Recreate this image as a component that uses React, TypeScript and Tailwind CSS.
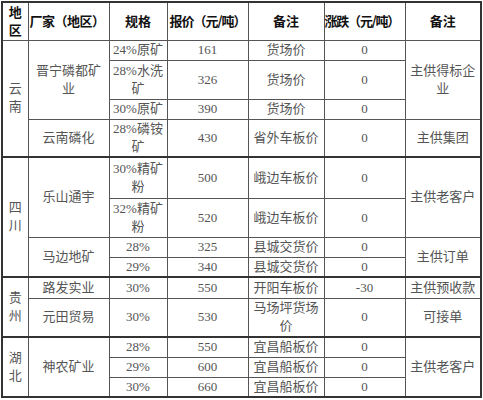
import React from "react";

type Cell = {
  t: React.ReactNode;
  rs?: number;
};

const L = (a: string, b: string) => (
  <>
    {a}
    <br />
    {b}
  </>
);

const rows: { h: number; thick?: boolean; cells: Cell[] }[] = [
  {
    h: 20,
    cells: [
      { t: L("云", "南"), rs: 4 },
      { t: L("晋宁磷都矿", "业"), rs: 3 },
      { t: "24%原矿" },
      { t: "161" },
      { t: "货场价" },
      { t: "0" },
      { t: L("主供得标企", "业"), rs: 3 },
    ],
  },
  {
    h: 39,
    cells: [{ t: L("28%水洗", "矿") }, { t: "326" }, { t: "货场价" }, { t: "0" }],
  },
  {
    h: 20,
    cells: [{ t: "30%原矿" }, { t: "390" }, { t: "货场价" }, { t: "0" }],
  },
  {
    h: 38,
    cells: [
      { t: "云南磷化" },
      { t: L("28%磷铵", "矿") },
      { t: "430" },
      { t: "省外车板价" },
      { t: "0" },
      { t: "主供集团" },
    ],
  },
  {
    h: 41,
    thick: true,
    cells: [
      { t: L("四", "川"), rs: 4 },
      { t: "乐山通宇", rs: 2 },
      { t: L("30%精矿", "粉") },
      { t: "500" },
      { t: "峨边车板价" },
      { t: "0" },
      { t: "主供老客户", rs: 2 },
    ],
  },
  {
    h: 39,
    cells: [{ t: L("32%精矿", "粉") }, { t: "520" }, { t: "峨边车板价" }, { t: "0" }],
  },
  {
    h: 20,
    cells: [
      { t: "马边地矿", rs: 2 },
      { t: "28%" },
      { t: "325" },
      { t: "县城交货价" },
      { t: "0" },
      { t: "主供订单", rs: 2 },
    ],
  },
  {
    h: 20,
    cells: [{ t: "29%" }, { t: "340" }, { t: "县城交货价" }, { t: "0" }],
  },
  {
    h: 21,
    thick: true,
    cells: [
      { t: L("贵", "州"), rs: 2 },
      { t: "路发实业" },
      { t: "30%" },
      { t: "550" },
      { t: "开阳车板价" },
      { t: "-30" },
      { t: "主供预收款" },
    ],
  },
  {
    h: 39,
    cells: [
      { t: "元田贸易" },
      { t: "30%" },
      { t: "530" },
      { t: L("马场坪货场", "价") },
      { t: "0" },
      { t: "可接单" },
    ],
  },
  {
    h: 20,
    thick: true,
    cells: [
      { t: L("湖", "北"), rs: 3 },
      { t: "神农矿业", rs: 3 },
      { t: "28%" },
      { t: "550" },
      { t: "宜昌船板价" },
      { t: "0" },
      { t: "主供老客户", rs: 3 },
    ],
  },
  {
    h: 20,
    cells: [{ t: "29%" }, { t: "600" }, { t: "宜昌船板价" }, { t: "0" }],
  },
  {
    h: 20,
    cells: [{ t: "30%" }, { t: "660" }, { t: "宜昌船板价" }, { t: "0" }],
  },
];

const widths = [26, 81, 58, 81, 76, 81, 76];

export default function App() {
  return (
    <div className="w-[483px] h-[400px] bg-white pt-[1px] pl-[1px]">
      <table className="table-fixed border-collapse w-[480px] border-2 border-[#333] font-['Liberation_Serif','Noto_Sans_CJK_SC',serif] text-[13px] leading-[18px] text-[#555]">
        <colgroup>
          {widths.map((w, i) => (
            <col key={i} style={{ width: w }} />
          ))}
        </colgroup>
        <thead>
          <tr className="h-[38px] font-['Noto_Sans_CJK_SC',sans-serif] font-bold text-[#111] text-[13px]">
            <th className="border border-[#555] p-0 text-center leading-[18px]">
              地<br />区
            </th>
            <th className="border border-[#555] p-0 text-left pl-[1px] whitespace-nowrap tracking-[-0.5px]">
              厂家（地区）
            </th>
            <th className="border border-[#555] p-0 text-center">规格</th>
            <th className="border border-[#555] p-0 text-center whitespace-nowrap tracking-[-1px]">
              报价（元/吨）
            </th>
            <th className="border border-[#555] p-0 text-center">备注</th>
            <th className="border border-[#555] p-0 text-left whitespace-nowrap tracking-[-1.2px]">
              涨跌（元/吨）
            </th>
            <th className="border border-[#555] p-0 text-center">备注</th>
          </tr>
        </thead>
        <tbody>
          {rows.map((r, ri) => (
            <tr key={ri} style={{ height: r.h }}>
              {r.cells.map((c, ci) => (
                <td
                  key={ci}
                  rowSpan={c.rs}
                  className={
                    "border border-[#555] p-0 text-center align-middle whitespace-nowrap " +
                    (r.thick ? "border-t-2 border-t-[#333]" : "")
                  }
                >
                  {c.t}
                </td>
              ))}
            </tr>
          ))}
        </tbody>
      </table>
    </div>
  );
}
